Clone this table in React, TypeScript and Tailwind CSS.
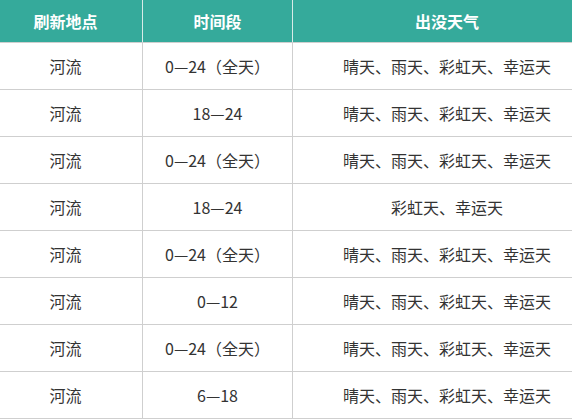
import React from "react";

const rows: [string, string, string][] = [
  ["河流", "0—24（全天）", "晴天、雨天、彩虹天、幸运天"],
  ["河流", "18—24", "晴天、雨天、彩虹天、幸运天"],
  ["河流", "0—24（全天）", "晴天、雨天、彩虹天、幸运天"],
  ["河流", "18—24", "彩虹天、幸运天"],
  ["河流", "0—24（全天）", "晴天、雨天、彩虹天、幸运天"],
  ["河流", "0—12", "晴天、雨天、彩虹天、幸运天"],
  ["河流", "0—24（全天）", "晴天、雨天、彩虹天、幸运天"],
  ["河流", "6—18", "晴天、雨天、彩虹天、幸运天"],
];

export default function App() {
  return (
    <div
      className="w-[572px] h-[419px] overflow-hidden bg-white"
      style={{ fontFamily: '"Noto Sans CJK SC", "Noto Sans", sans-serif' }}
    >
      <div className="w-[612px] -ml-[11px]">
        <div className="flex h-[43px] bg-[#35aa9b] border-b border-[#cfcfcf] text-white font-bold text-[16px]">
          <div className="w-[154px] flex items-center justify-center border-r border-[#d8ebe8]">刷新地点</div>
          <div className="w-[150px] flex items-center justify-center border-r border-[#d8ebe8]">时间段</div>
          <div className="w-[308px] flex items-center justify-center">出没天气</div>
        </div>
        {rows.map((r, i) => (
          <div key={i} className="flex h-[47px] border-b border-[#cfcfcf] text-[#333] text-[16px]">
            <div className="w-[154px] flex items-center justify-center border-r border-[#cfcfcf]">{r[0]}</div>
            <div className="w-[150px] flex items-center justify-center border-r border-[#cfcfcf]">{r[1]}</div>
            <div className="w-[308px] flex items-center justify-center">{r[2]}</div>
          </div>
        ))}
      </div>
    </div>
  );
}
